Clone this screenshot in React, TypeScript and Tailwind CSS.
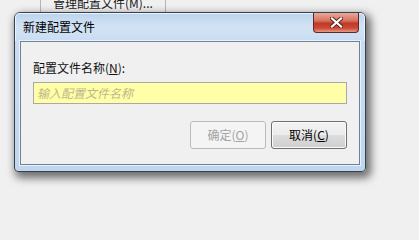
import React from "react";

const font = { fontFamily: '"Noto Sans CJK SC", "Noto Sans", sans-serif' };

export default function App() {
  return (
    <div
      className="relative flex flex-col w-screen min-w-[419px] h-screen min-h-[219px] overflow-hidden bg-[#f0f0f0] text-[12px] leading-[16px] text-[#111111]"
      style={font}
    >
      {/* menu item behind the dialog */}
      <div className="ml-[40px] w-[126px] h-[12px] shrink-0 border-x border-[#b5b5b5] bg-[#f0f0f0] flex items-end overflow-hidden">
        <div className="pl-[12px] pb-[1px] text-[12px] leading-[16px] text-[#1a1a1a] whitespace-nowrap">
          管理配置文件(M)...
        </div>
      </div>

      {/* dialog window */}
      <div className="ml-[14px] w-[352px] h-[160px] shrink-0 rounded-t-[6px] rounded-b-[4px] border border-[#34414f] bg-[linear-gradient(180deg,#bcd3ec_0px,#d3e3f5_14px,#c9dcf1_29px,#c0d6ee_100%)] shadow-[3px_4px_9px_2px_rgba(0,0,0,0.55)] flex flex-col">
        {/* title bar */}
        <div className="relative h-[28px] flex items-start pl-[7px] pt-[5px] rounded-t-[5px] border-t border-x border-[#eef4fb]">
          <span className="text-[12px] leading-[16px] text-black">新建配置文件</span>
          <div className="absolute right-[5px] -top-[1px] w-[46px] h-[20px] rounded-b-[4px] border border-t-0 border-[#5a2a28] bg-[linear-gradient(180deg,#e9a99c_0%,#d8735f_40%,#c0392b_55%,#cf4a35_80%,#e59c86_100%)] flex items-center justify-center">
            <svg width="13" height="11" viewBox="0 0 13 11">
              <path
                d="M2 1.5 L11 9.5 M11 1.5 L2 9.5"
                stroke="#5a1f1a"
                strokeWidth="4"
                strokeLinecap="square"
              />
              <path
                d="M2 1.5 L11 9.5 M11 1.5 L2 9.5"
                stroke="#ffffff"
                strokeWidth="2.2"
                strokeLinecap="square"
              />
            </svg>
          </div>
        </div>

        {/* client area */}
        <div className="mx-[5px] mb-[6px] flex-1 border border-[#6f8196] outline outline-1 outline-[#e9f1fa] bg-[#f0f0f0] flex flex-col px-[12px] pt-[18px]">
          <div className="text-[12px] leading-[16px]">
            配置文件名称(<span className="underline">N</span>):
          </div>
          <div className="mt-[6px] h-[22px] border border-[#a9a9a9] bg-[#ffffa8] flex items-center pl-[3px]">
            <span className="italic text-[#bcb68a] text-[12px] leading-[16px]">输入配置文件名称</span>
          </div>
          <div className="mt-[17px] flex justify-end gap-[5px]">
            <div className="w-[76px] h-[28px] rounded-[3px] border border-[#b8bcbf] bg-[#f4f4f4] flex items-center justify-center text-[#a3a3a3]">
              确定(<span className="underline">O</span>)
            </div>
            <div className="w-[76px] h-[28px] rounded-[3px] border border-[#707070] bg-[linear-gradient(180deg,#f3f3f3_0%,#ececec_50%,#dddddd_51%,#cfcfcf_100%)] shadow-[inset_0_0_0_1px_#fbfbfb] flex items-center justify-center text-black">
              取消(<span className="underline">C</span>)
            </div>
          </div>
        </div>
      </div>
    </div>
  );
}
